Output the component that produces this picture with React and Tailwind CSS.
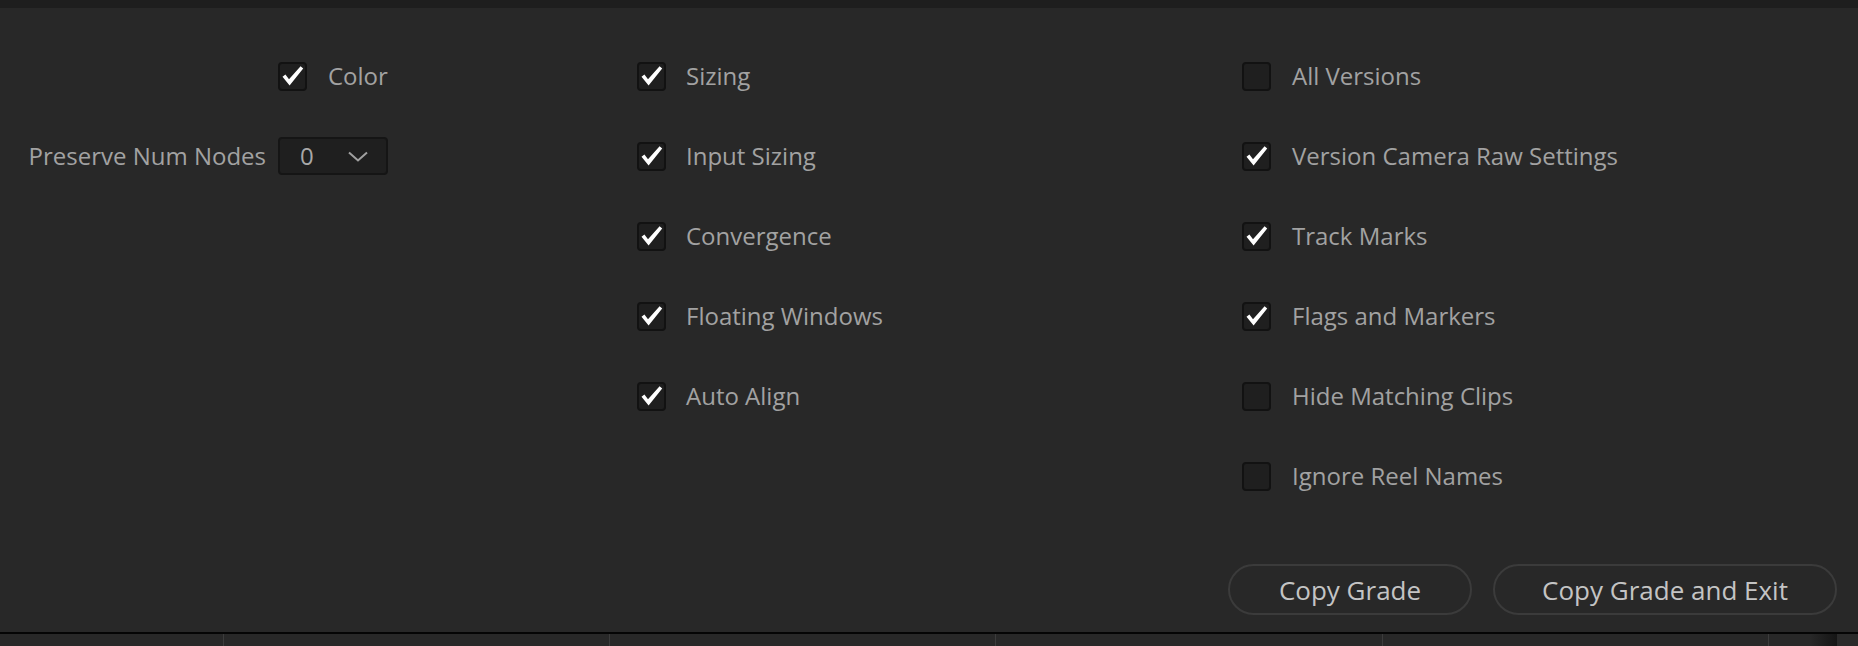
import React from "react";

const FONT = { fontFamily: '"Open Sans", "Noto Sans", sans-serif' };

function Check({ checked }) {
  return (
    <div className="relative w-[29px] h-[29px] rounded-[4px] border-2 border-[#121212] bg-[#1f1f1f] shrink-0">
      {checked && (
        <svg viewBox="0 0 29 29" className="absolute -left-[2px] -top-[2px] w-[29px] h-[29px]">
          <path d="M4.5 14.8 L7.4 12.6 L11 17.2 L22.6 4.2 L25.2 6.4 L11.6 23.6 Z" fill="#ffffff" />
        </svg>
      )}
    </div>
  );
}

function Item({ checked, label, gap = "gap-[21px]" }) {
  return (
    <div className={`h-[80px] flex items-center ${gap}`}>
      <Check checked={checked} />
      <span className="text-[24px] text-[#a2a2a2] leading-none whitespace-nowrap">{label}</span>
    </div>
  );
}

export default function App() {
  const col2 = [
    [true, "Sizing"],
    [true, "Input Sizing"],
    [true, "Convergence"],
    [true, "Floating Windows"],
    [true, "Auto Align"],
  ];
  const col3 = [
    [false, "All Versions"],
    [true, "Version Camera Raw Settings"],
    [true, "Track Marks"],
    [true, "Flags and Markers"],
    [false, "Hide Matching Clips"],
    [false, "Ignore Reel Names"],
  ];
  return (
    <div style={FONT} className="w-[1858px] h-[646px] bg-[#282828] flex flex-col overflow-hidden">
      <div className="h-[8px] bg-[#1e1e1e]" />
      <div className="h-[624px] flex flex-col">
        <div className="pt-[28px] grid grid-cols-[637px_605px_1fr]">
          {/* Column 1 */}
          <div className="grid grid-cols-[266px_1fr] gap-x-[12px] content-start">
            <div />
            <Item checked label="Color" />
            <div className="h-[80px] flex items-center justify-end">
              <span className="text-[24px] text-[#a2a2a2] leading-none whitespace-nowrap">Preserve Num Nodes</span>
            </div>
            <div className="h-[80px] flex items-center">
              <div className="w-[110px] h-[38px] rounded-[4px] border-2 border-[#151515] bg-[#1f1f1f] flex items-center pl-[20px] pr-[18px] justify-between">
                <span className="text-[24px] text-[#a8a8a8] leading-none">0</span>
                <svg viewBox="0 0 20 11" className="w-[20px] h-[11px]">
                  <polyline points="1,1.5 10,9.5 19,1.5" fill="none" stroke="#a0a0a0" strokeWidth="2" />
                </svg>
              </div>
            </div>
          </div>
          {/* Column 2 */}
          <div className="flex flex-col">
            {col2.map(([c, l]) => (
              <Item key={l} checked={c} label={l} gap="gap-[20px]" />
            ))}
          </div>
          {/* Column 3 */}
          <div className="flex flex-col">
            {col3.map(([c, l]) => (
              <Item key={l} checked={c} label={l} gap="gap-[21px]" />
            ))}
          </div>
        </div>
        <div className="mt-auto pb-[17px] pr-[21px] flex justify-end gap-[21px]">
          <button className="w-[244px] h-[51px] rounded-full border-2 border-[#3b3b3b] text-[26px] text-[#c4c4c4] leading-none flex items-center justify-center">
            Copy Grade
          </button>
          <button className="w-[344px] h-[51px] rounded-full border-2 border-[#3b3b3b] text-[26px] text-[#c4c4c4] leading-none flex items-center justify-center">
            Copy Grade and Exit
          </button>
        </div>
      </div>
      <div className="h-[2px] bg-[#050505]" />
      <div className="h-[12px] flex bg-[#282828]">
        <div className="w-[223px]" />
        <div className="w-[386px] border-l border-[#3c3c3c]" />
        <div className="w-[386px] border-l border-[#3c3c3c]" />
        <div className="w-[387px] border-l border-[#3c3c3c]" />
        <div className="w-[386px] border-l border-[#3c3c3c]" />
        <div className="w-[69px] border-l border-[#3c3c3c] flex">
          <div className="w-[42px]" />
          <div className="w-[27px] bg-gradient-to-r from-[#282828] to-[#151515]" />
        </div>
        <div className="flex-1 bg-[#2a2a2a]" />
      </div>
    </div>
  );
}
